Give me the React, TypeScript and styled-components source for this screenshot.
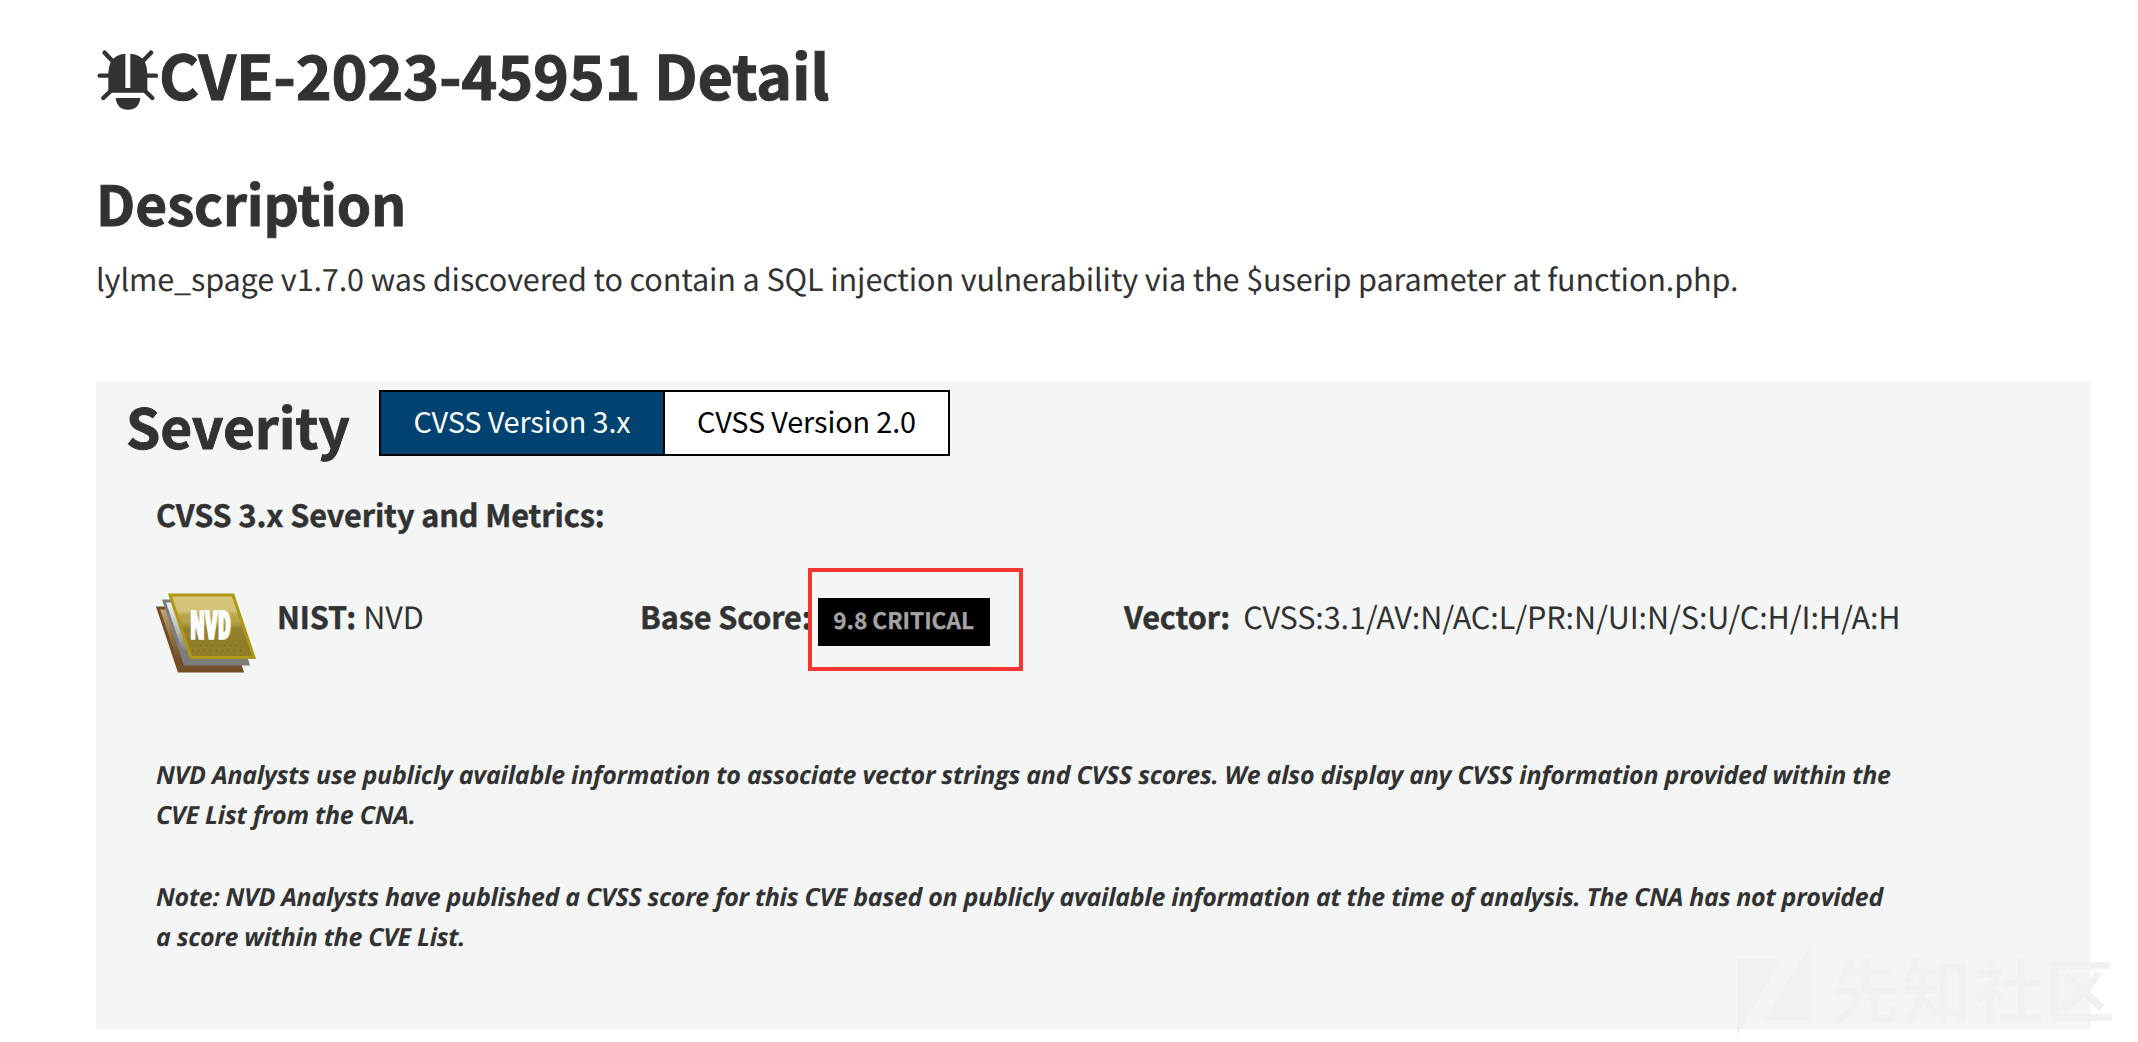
import React from "react";
import styled, { createGlobalStyle } from "styled-components";

const GlobalStyle = createGlobalStyle`
  * { box-sizing: border-box; }
  body {
    margin: 0;
    background: #fff;
    color: #323232;
    font-family: "Noto Sans CJK SC", "Noto Sans", sans-serif;
    text-rendering: geometricPrecision;
    overflow: hidden;
  }
`;

const Page = styled.main`
  position: relative;
  width: 2138px;
  height: 1042px;
  padding: 44px 47px 13px 96px;
  display: flex;
  flex-direction: column;
`;

const Title = styled.h1`
  display: flex;
  align-items: center;
  margin: 0 0 68px;
  height: 60px;
  font-size: 61.2px;
  line-height: 60px;
  font-weight: 700;
  letter-spacing: -0.28px;
  -webkit-text-stroke: 1px #323232;
  white-space: nowrap;
`;

const BugIcon = styled.svg`
  flex: none;
  width: 62px;
  height: 62px;
  margin: 13px 0 0 1px;
`;

const Heading = styled.h2`
  margin: 0;
  font-size: 55px;
  line-height: 60px;
  font-weight: 700;
  letter-spacing: -0.12px;
  -webkit-text-stroke: 0.9px #323232;
  white-space: nowrap;
`;

const Summary = styled.p`
  margin: 26px 0 83px;
  font-size: 30.6px;
  line-height: 40px;
  letter-spacing: -0.125px;
  white-space: nowrap;
`;

const Panel = styled.section`
  width: 1995px;
  height: 648px;
  padding: 9px 30px;
  background: #f4f6f5;
`;

const PanelHead = styled.div`
  display: flex;
  height: 66px;
  gap: 30px;
  & > ${Heading} { width: 223px; margin-top: 5px; }
`;

const Tabs = styled.div`
  display: flex;
  border: 2px solid #000;
`;

const Tab = styled.button<{ $active?: boolean }>`
  width: ${(p) => (p.$active ? 284 : 283)}px;
  padding: 0 0 5px;
  border: 0;
  border-right: ${(p) => (p.$active ? "2px solid #000" : "0")};
  background: ${(p) => (p.$active ? "#004370" : "#fff")};
  color: ${(p) => (p.$active ? "#fff" : "#000")};
  font: 28.8px "Noto Sans CJK SC", sans-serif;
  line-height: 56px;
  letter-spacing: -0.12px;
`;

const PanelBody = styled.div`
  padding-left: 30px;
`;

const SubHeading = styled.h3`
  margin: 38px 0 0;
  font-size: 30.6px;
  line-height: 40px;
  font-weight: 700;
  letter-spacing: -0.1px;
  -webkit-text-stroke: 0.45px #323232;
`;

const Metrics = styled.div`
  display: grid;
  grid-template-columns: 121px 363px 484px auto;
  height: 105px;
  margin: 59px 0 57px;
  font-size: 30.6px;
  line-height: 40px;
  letter-spacing: -0.12px;
  white-space: nowrap;
`;

const Cell = styled.div`
  display: flex;
  align-items: flex-start;
  padding-top: 3px;
`;

const Label = styled.strong<{ $gap?: number }>`
  margin-right: ${(p) => p.$gap ?? 0}px;
  -webkit-text-stroke: 0.45px #323232;
`;

const NvdLogo = styled.svg`
  width: 102px;
  height: 82px;
  overflow: visible;
`;

const LogoText = styled.text`
  font-family: "Open Sans", sans-serif;
  font-size: 39px;
  font-weight: 800;
  font-stretch: 75%;
  letter-spacing: 0;
`;

const Score = styled.span`
  width: 172px;
  height: 48px;
  margin-top: 2px;
  background: #000;
  color: #a3a3a3;
  font-size: 22.6px;
  line-height: 43px;
  font-weight: 700;
  letter-spacing: 0;
  -webkit-text-stroke: 0.3px #a3a3a3;
  text-align: center;
`;

const Highlight = styled.div`
  position: absolute;
  left: 808px;
  top: 568px;
  width: 215px;
  height: 103px;
  border: 4px solid #f53531;
`;

const Note = styled.p<{ $tracking: number }>`
  margin: 0 0 42px;
  font-family: "Open Sans", "Noto Sans", sans-serif;
  font-size: 25px;
  line-height: 40px;
  font-weight: 700;
  font-style: italic;
  letter-spacing: ${(p) => p.$tracking}px;
  white-space: nowrap;
`;

const Watermark = styled.div`
  position: absolute;
  left: 1737px;
  top: 944px;
  display: flex;
  color: #f1f1f1;
  font-size: 69px;
  line-height: 87px;
  font-weight: 500;
  letter-spacing: 2.5px;
  text-shadow: 0 0 1px #ebeceb;
  white-space: nowrap;
  svg { width: 74px; height: 92px; margin-right: 20px; }
`;

export default function App() {
  return (
    <>
      <GlobalStyle />
      <Page>
        <Title>
          <BugIcon viewBox="50 60 186 186" fill="#323232">
            <g stroke="#323232" strokeWidth="13" strokeLinecap="round">
              <path d="M73 68 97 94M212 68 187 94M58 137H90M197 137H227M69 204 92 182M216 204 193 182" />
            </g>
            <g stroke="none">
              <path d="M135 71V174H150V71Q181 73 194 97Q201 111 201 130V188H84V130Q84 111 91 97Q104 73 135 71Z" />
              <path d="M106 204H180Q176 239 143 239Q110 239 106 204Z" />
            </g>
          </BugIcon>
          CVE-2023-45951 Detail
        </Title>
        <Heading>Description</Heading>
        <Summary>
          lylme_spage v1.7.0 was discovered to contain a SQL injection vulnerability via the $userip parameter at
          function.php.
        </Summary>
        <Panel>
          <PanelHead>
            <Heading>Severity</Heading>
            <Tabs>
              <Tab $active>CVSS Version 3.x</Tab>
              <Tab>CVSS Version 2.0</Tab>
            </Tabs>
          </PanelHead>
          <PanelBody>
            <SubHeading>CVSS 3.x Severity and Metrics:</SubHeading>
            <Metrics>
              <NvdLogo viewBox="0 0 102 82">
                <defs>
                  <linearGradient id="gold" x1="0" y1="0" x2="0" y2="1">
                    <stop offset="0" stopColor="#d8c67c" />
                    <stop offset="0.25" stopColor="#d4c277" />
                    <stop offset="0.32" stopColor="#baa650" />
                    <stop offset="0.44" stopColor="#b5a04a" />
                    <stop offset="0.54" stopColor="#94802b" />
                    <stop offset="1" stopColor="#8e7c2a" />
                  </linearGradient>
                  <linearGradient id="silver" x1="0" y1="0" x2="0" y2="1">
                    <stop offset="0" stopColor="#f2f2f2" />
                    <stop offset="0.5" stopColor="#b4b4b4" />
                    <stop offset="0.8" stopColor="#7c7e7e" />
                  </linearGradient>
                  <linearGradient id="bronze" x1="0" y1="0" x2="0" y2="1">
                    <stop offset="0" stopColor="#c3a67c" />
                    <stop offset="0.4" stopColor="#94774a" />
                    <stop offset="0.8" stopColor="#74502a" />
                  </linearGradient>
                </defs>
                <path d="M2 15H66L86 78H23Z" fill="url(#bronze)" stroke="#754d22" strokeWidth="3" />
                <path d="M8 8H72L92 71H29Z" fill="url(#silver)" stroke="#7c7e7e" strokeWidth="3" />
                <path d="M14 2H77L98 64.500H35Z" fill="url(#gold)" stroke="#ad9714" strokeWidth="3" />
                <path d="M38 52.500H82M36 57.500H90" stroke="#6d5b1a" strokeWidth="1" strokeDasharray="1 5" />
                <LogoText
                  x="34"
                  y="46"
                  fill="#fff"
                  stroke="#fff"
                  strokeWidth="1.6"
                  textLength="41"
                  lengthAdjust="spacingAndGlyphs"
                >
                  NVD
                </LogoText>
              </NvdLogo>
              <Cell>
                <Label $gap={7}>NIST:</Label>NVD
              </Cell>
              <Cell>
                <Label $gap={6}>Base Score:</Label>
                <Score>9.8 CRITICAL</Score>
              </Cell>
              <Cell>
                <Label $gap={13}>Vector:</Label>CVSS:3.1/AV:N/AC:L/PR:N/UI:N/S:U/C:H/I:H/A:H
              </Cell>
            </Metrics>
            <Note $tracking={-0.26}>
              NVD Analysts use publicly available information to associate vector strings and CVSS scores. We also
              display any CVSS information provided within the
              <br />
              CVE List from the CNA.
            </Note>
            <Note $tracking={-0.31}>
              Note: NVD Analysts have published a CVSS score for this CVE based on publicly available information at
              the time of analysis. The CNA has not provided
              <br />a score within the CVE List.
            </Note>
          </PanelBody>
        </Panel>
        <Highlight />
        <Watermark>
          <svg viewBox="0 0 74 92" fill="currentColor">
            <path d="M0 15H45L0 91ZM73 1V76H27Z" />
          </svg>
          先知社区
        </Watermark>
      </Page>
    </>
  );
}
